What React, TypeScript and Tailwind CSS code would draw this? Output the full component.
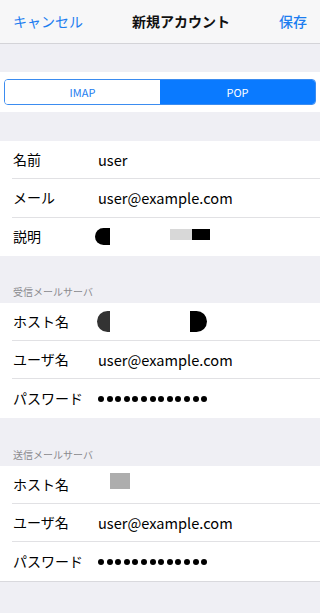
import React from "react";

const font = { fontFamily: '"Noto Sans CJK JP", "Noto Sans", sans-serif' };

function Dots() {
  return (
    <div className="flex items-center gap-[2.6px]" aria-label="password">
      {Array.from({ length: 13 }).map((_, i) => (
        <span key={i} className="block w-[6px] h-[6px] rounded-full bg-black" />
      ))}
    </div>
  );
}

function Row({ label, children, last }: { label: string; children?: React.ReactNode; last?: boolean }) {
  return (
    <div className="pl-[12px]">
      <div className={`flex items-center h-[38.3px] ${last ? "" : "border-b border-[#e1e1e4]"}`}>
        <div className="w-[86px] pl-px text-[14px] text-black">{label}</div>
        <div className="flex-1 text-[14.6px] text-black">{children}</div>
      </div>
    </div>
  );
}

function SectionTitle({ text, h }: { text: string; h: string }) {
  return (
    <div className={`${h} flex items-end pl-[13px] pb-[4px] text-[10px] text-[#8a8a8e]`}>{text}</div>
  );
}

export default function App() {
  return (
    <div className="w-[320px] h-[613px] bg-[#efeff4] overflow-hidden" style={font}>
      <div className="h-[44px] bg-[#f7f7f8] border-b border-[#d4d4d8] flex items-center justify-between px-[13px]">
        <span className="text-[14px] text-[#1c7df0]">キャンセル</span>
        <span className="text-[14px] font-bold text-[#111]">新規アカウント</span>
        <span className="text-[14px] text-[#1c7df0] font-medium">保存</span>
      </div>
      <div className="h-[28px]" />
      <div className="bg-white h-[40px] px-[4px] flex items-center">
        <div className="flex w-full h-[26px] rounded-[4px] border border-[#3b8cf0] overflow-hidden text-[11px]">
          <div className="flex-1 flex items-center justify-center text-[#1c7df0] bg-white">IMAP</div>
          <div className="flex-1 flex items-center justify-center text-white bg-[#0a7aff]">POP</div>
        </div>
      </div>
      <div className="h-[29px]" />
      <div className="bg-white">
        <Row label="名前">user</Row>
        <Row label="メール">user@example.com</Row>
        <Row label="説明" last>
          <div className="relative h-[20px]">
            <span className="absolute left-[-3px] top-[1px] w-[15px] h-[17px] bg-black rounded-l-full" />
            <span className="absolute left-[72px] top-[2px] w-[22px] h-[11px] bg-[#d8d8d8]" />
            <span className="absolute left-[94px] top-[2px] w-[18px] h-[11px] bg-black" />
          </div>
        </Row>
      </div>
      <SectionTitle text="受信メールサーバ" h="h-[47px]" />
      <div className="bg-white">
        <Row label="ホスト名">
          <div className="relative h-[22px]">
            <span className="absolute left-[-1px] top-[0px] w-[13px] h-[21px] bg-[#333] rounded-l-full" />
            <span className="absolute left-[92px] top-[0px] w-[17px] h-[21px] bg-black rounded-r-full" />
          </div>
        </Row>
        <Row label="ユーザ名">user@example.com</Row>
        <Row label="パスワード" last>
          <Dots />
        </Row>
      </div>
      <SectionTitle text="送信メールサーバ" h="h-[48px]" />
      <div className="bg-white border-b border-[#d9d9dd]">
        <Row label="ホスト名">
          <div className="relative h-[22px]">
            <span className="absolute left-[12px] top-[0px] w-[20px] h-[16px] bg-[#adadad]" />
          </div>
        </Row>
        <Row label="ユーザ名">user@example.com</Row>
        <Row label="パスワード" last>
          <Dots />
        </Row>
      </div>
    </div>
  );
}
